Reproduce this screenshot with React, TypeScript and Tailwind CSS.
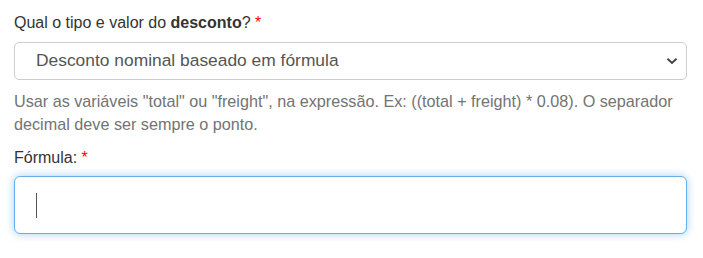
import React from "react";

export default function App() {
  return (
    <div
      className="w-[703px] h-[258px] bg-white pl-[14px] pr-[16px] pt-[12px]"
      style={{ fontFamily: '"Liberation Sans", Arial, sans-serif' }}
    >
      <div className="text-[16px] leading-[22px] text-[#333333]">
        Qual o tipo e valor do <b className="font-bold">desconto</b>?{" "}
        <span className="text-[#ff0000]">*</span>
      </div>
      <div className="mt-[8px] h-[38px] border border-[#cccccc] rounded-[5px] flex items-center pl-[21px] pr-[8px] bg-white">
        <span className="flex-1 text-[17.4px] text-[#555555] leading-none">
          Desconto nominal baseado em fórmula
        </span>
        <svg width="12" height="8" viewBox="0 0 12 8">
          <path d="M1.5 1.8 L6 6 L10.5 1.8" fill="none" stroke="#444" strokeWidth="2" />
        </svg>
      </div>
      <div className="mt-[10px] text-[16.2px] leading-[22.5px] text-[#737373]">
        Usar as variáveis "total" ou "freight", na expressão. Ex: ((total + freight) * 0.08). O separador decimal deve ser sempre o ponto.
      </div>
      <div className="mt-[12px] text-[16px] leading-[22px] text-[#333333]">
        Fórmula: <span className="text-[#ff0000]">*</span>
      </div>
      <div className="mt-[7px] h-[58px] border border-[#66afe9] rounded-[6px] bg-white flex items-center pl-[21px] shadow-[0_0_8px_rgba(102,175,233,0.6)]">
        <span className="block w-[1px] h-[25px] bg-[#555555]" />
      </div>
    </div>
  );
}
